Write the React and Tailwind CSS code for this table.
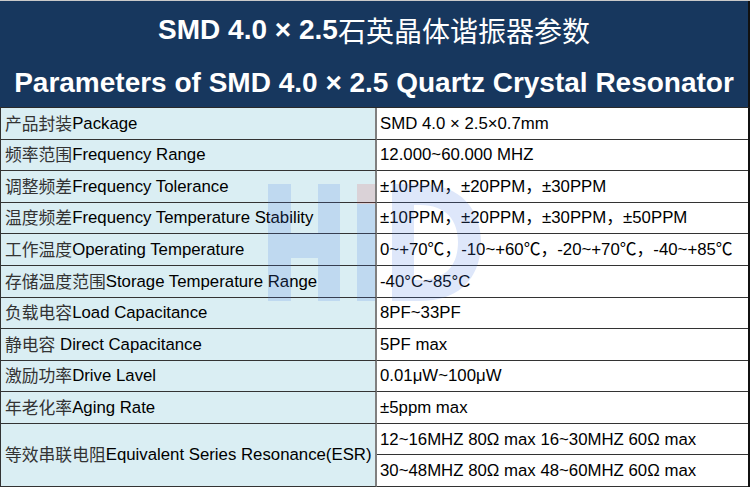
import React from "react";

const rows = [
  { zh: "产品封装", en: "Package", val: ["SMD 4.0 × 2.5×0.7mm"] },
  { zh: "频率范围", en: "Frequency Range", val: ["12.000~60.000 MHZ"] },
  { zh: "调整频差", en: "Frequency Tolerance", val: ["±10PPM，±20PPM，±30PPM"] },
  { zh: "温度频差", en: "Frequency Temperature Stability", val: ["±10PPM，±20PPM，±30PPM，±50PPM"] },
  { zh: "工作温度", en: "Operating Temperature", val: ["0~+70℃，-10~+60℃，-20~+70℃，-40~+85℃"] },
  { zh: "存储温度范围", en: "Storage Temperature Range", val: ["-40°C~85°C"] },
  { zh: "负载电容", en: "Load Capacitance", val: ["8PF~33PF"] },
  { zh: "静电容", en: " Direct Capacitance", val: ["5PF max"] },
  { zh: "激励功率", en: "Drive Lavel", val: ["0.01μW~100μW"] },
  { zh: "年老化率", en: "Aging Rate", val: ["±5ppm max"] },
  {
    zh: "等效串联电阻",
    en: "Equivalent Series Resonance(ESR)",
    val: ["12~16MHZ 80Ω max 16~30MHZ 60Ω max", "30~48MHZ 80Ω max 48~60MHZ 60Ω max"],
  },
];

const font = { fontFamily: '"Liberation Sans", Arial, "Noto Sans CJK SC", sans-serif' };

// faint HJD logo watermark over the table
const Watermark = () => (
  <svg className="absolute inset-0 pointer-events-none" width="750" height="487" viewBox="0 0 750 487">
    <g fill="rgba(70,120,230,0.18)">
      <rect x="268" y="183" width="23" height="117" />
      <rect x="318" y="183" width="22" height="117" />
      <rect x="291" y="232" width="27" height="25" />
      <rect x="357" y="203" width="18" height="97" />
      <path d="M392 183 H420 C462 183 481 210 481 241 C481 274 462 300 420 300 H392 Z M414 204 V279 H420 C446 279 458 264 458 241 C458 219 446 204 420 204 Z" fillRule="evenodd" />
    </g>
    <rect x="357" y="183" width="18" height="20" fill="rgba(220,70,70,0.16)" />
  </svg>
);

const App = () => {
  return (
    <div style={font} className="relative w-[750px] h-[487px] overflow-hidden bg-white border-t border-[#c9c9c9]">
      <div className="h-[106px] bg-[#17375e] border-r-2 border-[#111] text-white font-bold text-[28px] leading-none">
        <div className="h-[53px] flex items-center justify-center pt-1">
          SMD 4.0 × 2.5<span className="font-normal" style={{ fontFamily: '"Noto Sans CJK SC", serif' }}>石英晶体谐振器参数</span>
        </div>
        <div className="h-[53px] flex items-center justify-center pt-1">
          Parameters of SMD 4.0 × 2.5 Quartz Crystal Resonator
        </div>
      </div>
      <div className="grid grid-cols-[376px_1fr] grid-rows-[repeat(12,minmax(0,1fr))] h-[380px] border-t border-[#2a2a2a] border-l border-r-2 border-l-[#333] border-r-[#111] text-[16.8px] text-black">
        {rows.map((r, i) => (
          <React.Fragment key={i}>
            <div
              className={
                "bg-[#daeef3] border-r-2 border-r-[#7f7f7f] border-b border-b-[#333] flex items-center pl-1 whitespace-nowrap " +
                (r.val.length > 1 ? "row-span-2" : "")
              }
            >
              <span className="text-[#333]" style={{ fontFamily: '"Noto Sans CJK SC", serif' }}>{r.zh}</span>
              <span className="whitespace-pre">{r.en}</span>
            </div>
            {r.val.map((v, j) => (
              <div key={j} className="border-b border-[#333] flex items-center pl-[3px] whitespace-nowrap">
                {v}
              </div>
            ))}
          </React.Fragment>
        ))}
      </div>
      <Watermark />
    </div>
  );
};

export default App;
